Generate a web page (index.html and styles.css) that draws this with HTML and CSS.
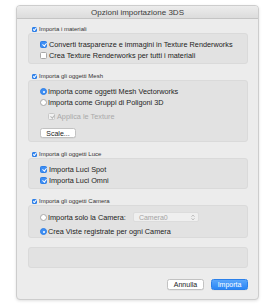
FILE: index.html
```html
<!DOCTYPE html>
<html>
<head>
<meta charset="utf-8">
<link rel="stylesheet" href="styles.css">
</head>
<body>
<div class="window">
  <div class="titlebar">Opzioni importazione 3DS</div>
  <div class="content">

    <div class="sec-label"><span class="cb small on"></span>Importa i materiali</div>
    <div class="group g1">
      <div class="row"><span class="cb on"></span>Converti trasparenze e immagini in Texture Renderworks</div>
      <div class="row"><span class="cb"></span>Crea Texture Renderworks per tutti i materiali</div>
    </div>

    <div class="sec-label gap"><span class="cb small on"></span>Importa gli oggetti Mesh</div>
    <div class="group g2">
      <div class="row"><span class="rb on"></span>Importa come oggetti Mesh Vectorworks</div>
      <div class="row"><span class="rb"></span>Importa come Gruppi di Poligoni 3D</div>
      <div class="row sub disabled"><span class="cb dis"></span>Applica le Texture</div>
      <div class="btn-row"><span class="btn">Scale...</span></div>
    </div>

    <div class="sec-label gap"><span class="cb small on"></span>Importa gli oggetti Luce</div>
    <div class="group g1">
      <div class="row"><span class="cb on"></span>Importa Luci Spot</div>
      <div class="row"><span class="cb on"></span>Importa Luci Omni</div>
    </div>

    <div class="sec-label gap"><span class="cb small on"></span>Importa gli oggetti Camera</div>
    <div class="group g4">
      <div class="row r1"><span class="rb"></span>Importa solo la Camera:<span class="popup"><span>Camera0</span><svg class="arrows" width="4" height="7" viewBox="0 0 4 7"><path d="M0.6 2.6 L2 1.2 L3.4 2.6 M0.6 4.4 L2 5.8 L3.4 4.4" fill="none" stroke="#9a9a9a" stroke-width="0.7"/></svg></span></div>
      <div class="row r2"><span class="rb on"></span>Crea Viste registrate per ogni Camera</div>
    </div>

    <div class="empty"></div>

    <div class="footer">
      <span class="btn fbtn">Annulla</span>
      <span class="btn fbtn primary">Importa</span>
    </div>
  </div>
</div>
</body>
</html>
```
FILE: styles.css
```css
* { box-sizing: border-box; }
html, body { margin: 0; padding: 0; background: #ffffff; }
body {
  font-family: "Liberation Sans", Arial, sans-serif;
  color: #2a2a2a;
  width: 278px;
  height: 308px;
  overflow: hidden;
}
.window {
  margin: 5px 0 0 16px;
  width: 243px;
  height: 295px;
  background: #ececec;
  border: 1px solid #cdcdcd;
  border-radius: 4px;
  box-shadow: 0 1px 3px rgba(0,0,0,0.12);
  overflow: hidden;
}
.titlebar {
  height: 13px;
  line-height: 13px;
  text-align: center;
  font-size: 8px;
  color: #3c3c3c;
  background: linear-gradient(#ececec, #dcdcdc);
  border-bottom: 1px solid #c4c4c4;
}
.content {
  padding: 6px 10px 0 11px;
}
.sec-label {
  height: 8px;
  display: flex;
  align-items: center;
  font-size: 6px;
  color: #333;
  padding-left: 4px;
}
.sec-label.gap { margin-top: 8px; }
.group {
  background: #e2e2e2;
  border: 1px solid #dadada;
  border-radius: 3px;
  padding: 5px 0 0 11px;
}
.g1 { height: 31px; }
.g2 { height: 62px; }
.g4 { height: 33px; }
.row {
  height: 11px;
  display: flex;
  align-items: center;
  font-size: 7.3px;
  color: #222;
}
.row.sub { margin-top: 3px; padding-left: 8px; }
.row.disabled { color: #a9a9a9; }
.row.r1 { height: 12px; }
.row.r2 { margin-top: 3px; }
.cb {
  width: 7px;
  height: 7px;
  border-radius: 1.5px;
  background: #fff;
  border: 1px solid #a8a8a8;
  margin-right: 2px;
  flex: none;
  position: relative;
}
.cb.small { width: 5px; height: 5px; margin-right: 2px; border-radius: 1px; }
.cb.on {
  background: #3d8ef4;
  border-color: #2f7fe6;
}
.cb.on::after, .cb.dis::after {
  content: "";
  position: absolute;
  left: 1.6px;
  top: 0.2px;
  width: 1.6px;
  height: 3.4px;
  border: solid #fff;
  border-width: 0 1px 1px 0;
  transform: rotate(40deg);
}
.cb.small.on::after {
  left: 1px;
  top: -0.3px;
  width: 1.2px;
  height: 2.6px;
}
.cb.dis { background: #f2f2f2; border-color: #c8c8c8; }
.cb.dis::after { border-color: #b5b5b5; }
.rb {
  width: 7px;
  height: 7px;
  border-radius: 50%;
  background: #fff;
  border: 1px solid #a8a8a8;
  margin-right: 1px;
  flex: none;
  position: relative;
}
.rb.on { background: #3d8ef4; border-color: #2f7fe6; }
.rb.on::after {
  content: "";
  position: absolute;
  left: 1.5px;
  top: 1.5px;
  width: 2px;
  height: 2px;
  border-radius: 50%;
  background: #fff;
}
.btn-row { margin-top: 6px; display: flex; }
.btn {
  display: flex;
  align-items: center;
  justify-content: center;
  height: 10px;
  width: 36px;
  font-size: 7px;
  color: #222;
  background: #fff;
  border: 1px solid #c2c2c2;
  border-radius: 2.5px;
  box-shadow: 0 0.5px 0 rgba(0,0,0,0.08);
}
.popup {
  margin-left: 7px;
  width: 66px;
  height: 10px;
  display: flex;
  align-items: center;
  justify-content: space-between;
  background: #efefef;
  border: 1px solid #dcdcdc;
  border-radius: 2px;
  padding: 0 3px 0 5px;
  color: #a4a4a4;
  font-size: 7px;
}
.popup .arrows { flex: none; }
.empty {
  margin-top: 9px;
  height: 21px;
  background: #e2e2e2;
  border: 1px solid #dadada;
  border-radius: 3px;
}
.footer {
  margin-top: 11px;
  display: flex;
  justify-content: flex-end;
  gap: 7px;
}
.fbtn { width: 37px; height: 11px; }
.primary {
  color: #fff;
  background: linear-gradient(#5aa6fb, #2a86f5);
  border-color: #2b80ea;
}
```
